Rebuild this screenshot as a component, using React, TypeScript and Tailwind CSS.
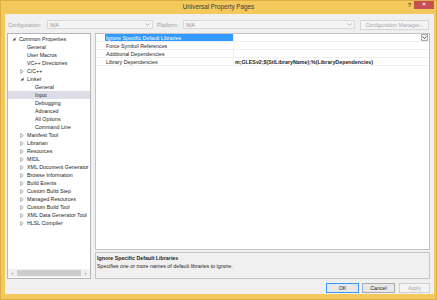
import React from "react";

type Node = { label: string; level: number; state?: "open" | "closed"; selected?: boolean };

const tree: Node[] = [
  { label: "Common Properties", level: 0, state: "open" },
  { label: "General", level: 1 },
  { label: "User Macros", level: 1 },
  { label: "VC++ Directories", level: 1 },
  { label: "C/C++", level: 1, state: "closed" },
  { label: "Linker", level: 1, state: "open" },
  { label: "General", level: 2 },
  { label: "Input", level: 2, selected: true },
  { label: "Debugging", level: 2 },
  { label: "Advanced", level: 2 },
  { label: "All Options", level: 2 },
  { label: "Command Line", level: 2 },
  { label: "Manifest Tool", level: 1, state: "closed" },
  { label: "Librarian", level: 1, state: "closed" },
  { label: "Resources", level: 1, state: "closed" },
  { label: "MIDL", level: 1, state: "closed" },
  { label: "XML Document Generator", level: 1, state: "closed" },
  { label: "Browse Information", level: 1, state: "closed" },
  { label: "Build Events", level: 1, state: "closed" },
  { label: "Custom Build Step", level: 1, state: "closed" },
  { label: "Managed Resources", level: 1, state: "closed" },
  { label: "Custom Build Tool", level: 1, state: "closed" },
  { label: "XML Data Generator Tool", level: 1, state: "closed" },
  { label: "HLSL Compiler", level: 1, state: "closed" },
];

const props = [
  { name: "Ignore Specific Default Libraries", value: "", selected: true },
  { name: "Force Symbol References", value: "" },
  { name: "Additional Dependencies", value: "" },
  { name: "Library Dependencies", value: "m;GLESv2;$(StlLibraryName);%(LibraryDependencies)" },
];

const pad = ["pl-[4px]", "pl-[12px]", "pl-[20px]"];

const Chevron = ({ color = "#8a8a8a" }: { color?: string }) => (
  <svg width="5" height="3" viewBox="0 0 5 3">
    <path d="M0.5 0.5 L2.5 2.5 L4.5 0.5" fill="none" stroke={color} strokeWidth="0.9" />
  </svg>
);

const Expander = ({ state }: { state?: "open" | "closed" }) => {
  if (!state) return <span className="w-[5px] shrink-0" />;
  return (
    <span className="w-[5px] shrink-0 flex items-center">
      {state === "open" ? (
        <svg width="4" height="4" viewBox="0 0 4 4">
          <path d="M3.5 0.5 L3.5 3.5 L0.5 3.5 Z" fill="#3c3c3c" />
        </svg>
      ) : (
        <svg width="4" height="5" viewBox="0 0 4 5">
          <path d="M0.7 0.5 L3.3 2.5 L0.7 4.5 Z" fill="none" stroke="#8c8c8c" strokeWidth="0.7" />
        </svg>
      )}
    </span>
  );
};

const Combo = ({ w }: { w: string }) => (
  <div className={`${w} h-[9px] flex items-center justify-between border border-[#d9d9d9] bg-[#f4f4f4] pl-[2px] pr-[2px] text-[#8d8d8d]`}>
    <span>N/A</span>
    <Chevron color="#b0b0b0" />
  </div>
);

export default function App() {
  return (
    <div
      className="w-[437px] h-[300px] flex flex-col bg-[#f4c95c] border border-[#dcae46] text-[5.3px] leading-[8px] text-[#1e1e1e] overflow-hidden"
      style={{ fontFamily: '"Liberation Sans", Arial, sans-serif' }}
    >
      {/* title bar */}
      <div className="h-[13px] shrink-0 grid grid-cols-[1fr_auto_1fr] items-start">
        <div />
        <div className="text-[6.3px] leading-[12px] text-[#3a3a3a]">Universal Property Pages</div>
        <div className="flex justify-end items-start">
          <span className="mr-[3px] mt-[1px] text-[5.5px] leading-[7px] font-bold text-[#444]">?</span>
          <div className="w-[20px] h-[9px] bg-[#c75050] mr-[2px] -mt-[1px] flex items-center justify-center text-white text-[6px] leading-[9px] font-bold">
            ×
          </div>
        </div>
      </div>

      {/* client area */}
      <div className="h-[280px] ml-[4px] mr-[2px] bg-[#f0f0f0] flex flex-col pl-[2px] pr-[4px]">
        <div className="mt-[6px] h-[9px] flex items-center text-[#a0a0a0]">
          <span className="w-[40px] pl-[1px]">Configuration:</span>
          <Combo w="w-[106px]" />
          <span className="w-[26px] ml-[4px]">Platform:</span>
          <Combo w="w-[172px]" />
          <div className="ml-[5px] w-[69px] h-[10px] flex items-center justify-center border border-[#d5d5d5] bg-[#f4f4f4] text-[#a8a8a8]">
            Configuration Manager...
          </div>
        </div>

        <div className="mt-[4px] h-[246px] flex gap-[4px]">
          {/* tree */}
          <div className="w-[84px] border border-[#b4b6bb] bg-white flex flex-col">
            <div className="flex-1 pt-[1px]">
              {tree.map((n, i) => (
                <div
                  key={i}
                  className={`h-[8px] flex items-center gap-[2px] whitespace-nowrap ${pad[n.level]} ${n.selected ? "bg-[#dcdde6]" : ""}`}
                >
                  <Expander state={n.state} />
                  <span>{n.label}</span>
                </div>
              ))}
            </div>
            <div className="h-[8px] mb-[1px] flex items-center bg-[#f0f0f0] text-[#606060]">
              <span className="w-[9px] text-center">‹</span>
              <div className="w-[65px] h-[6px] bg-[#cdcdcd]" />
              <span className="w-[9px] text-center">›</span>
            </div>
          </div>

          {/* property grid + description */}
          <div className="flex-1 flex flex-col">
            <div className="h-[217px] border border-[#c4c4c8] bg-white">
              {props.map((p, i) => (
                <div key={i} className="h-[8px] flex border-b border-[#f0f0f0]">
                  <div className="w-[9px] shrink-0" />
                  <div
                    className={`w-[129px] shrink-0 pl-[1px] whitespace-nowrap border-r border-[#f0f0f0] ${p.selected ? "bg-[#3399ff] text-white" : ""}`}
                  >
                    {p.name}
                  </div>
                  <div className="flex-1 flex items-center justify-between pl-[1px] font-bold whitespace-nowrap">
                    <span>{p.value}</span>
                    {p.selected && (
                      <div className="w-[7px] h-[7px] mr-[1px] border border-[#acacac] bg-[#f0f0f0] flex items-center justify-center">
                        <Chevron color="#505050" />
                      </div>
                    )}
                  </div>
                </div>
              ))}
            </div>
            <div className="mt-[2px] h-[27px] border border-[#c4c4c8] bg-[#f0f0f0] pl-[1px] pt-[1px]">
              <div className="font-bold">Ignore Specific Default Libraries</div>
              <div>Specifies one or more names of default libraries to ignore.</div>
            </div>
          </div>
        </div>

        {/* buttons */}
        <div className="mt-[4px] h-[9px] flex justify-end">
          <div className="w-[33px] h-[10px] flex items-center justify-center border border-[#3399ff] bg-[#e8e8e8]">OK</div>
          <div className="ml-[3px] w-[33px] h-[10px] flex items-center justify-center border border-[#acacac] bg-[#e8e8e8]">
            Cancel
          </div>
          <div className="ml-[4px] w-[31px] h-[10px] flex items-center justify-center border border-[#cfcfcf] bg-[#f4f4f4] text-[#a8a8a8]">
            Apply
          </div>
        </div>
      </div>
    </div>
  );
}
